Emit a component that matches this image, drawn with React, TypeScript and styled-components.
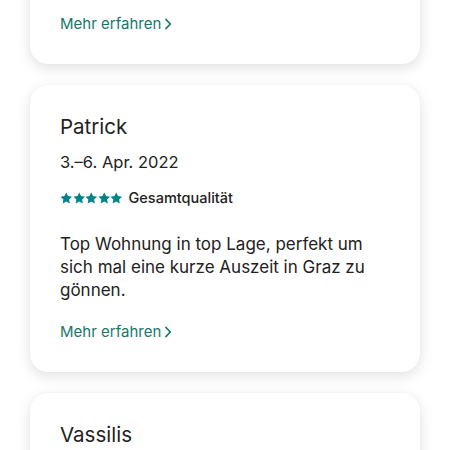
import React from "react";
import styled, { createGlobalStyle } from "styled-components";

const Global = createGlobalStyle`
  html, body { margin: 0; padding: 0; background: #ffffff; }
  body { font-family: Inter, "Noto Sans", Roboto, sans-serif; color: #222222; }
`;

const Page = styled.div`
  width: 450px;
  height: 450px;
  overflow: hidden;
  background: #ffffff;
`;

const List = styled.div`
  display: flex;
  flex-direction: column;
  gap: 21px;
  padding: 0 30px;
  margin-top: -186px;
`;

const Card = styled.div`
  background: #ffffff;
  border-radius: 18px;
  box-shadow: 0 4px 14px rgba(0, 0, 0, 0.12), 0 0 2px rgba(0, 0, 0, 0.04);
  padding: 29px 30px 30px;
  display: flex;
  flex-direction: column;
`;

const FirstCard = styled(Card)`
  padding-top: 200px;
`;

const Name = styled.div`
  font-size: 20.5px;
  line-height: 26px;
  font-weight: 400;
  color: #222222;
`;

const DateText = styled.div`
  margin-top: 11px;
  font-size: 16.5px;
  line-height: 22px;
  color: #222222;
`;

const RatingRow = styled.div`
  margin-top: 15px;
  display: flex;
  align-items: center;
  gap: 6px;
  font-size: 14.5px;
  line-height: 20px;
  font-weight: 500;
  color: #222222;
`;

const Stars = styled.div`
  display: flex;
  gap: 0;
  color: #008489;
`;

const Body = styled.p`
  margin: 25px 0 0;
  font-size: 17px;
  line-height: 23px;
  color: #222222;
`;

const MoreLink = styled.a<{ $first?: boolean }>`
  margin-top: ${(p) => (p.$first ? "0" : "20px")};
  display: inline-flex;
  align-items: center;
  gap: 3px;
  font-size: 15px;
  line-height: 20px;
  color: #17776c;
  text-decoration: none;
  align-self: flex-start;
`;

const Star = () => (
  <svg width="12.5" height="12.5" viewBox="0 0 24 24" fill="currentColor">
    <path d="M12 0.8l3.4 7 7.7 1.1-5.6 5.4 1.3 7.7L12 18.4 5.2 22l1.3-7.7L0.9 8.9l7.7-1.1z" />
  </svg>
);

const Chevron = () => (
  <svg width="8" height="12" viewBox="0 0 8 12" fill="none" stroke="currentColor" strokeWidth="1.8" strokeLinecap="round" strokeLinejoin="round">
    <path d="M2 1.5L6.3 6 2 10.5" />
  </svg>
);

const More = ({ first }: { first?: boolean }) => (
  <MoreLink $first={first}>
    Mehr erfahren
    <Chevron />
  </MoreLink>
);

export default function App() {
  return (
    <Page>
      <Global />
      <List>
        <FirstCard>
          <More first />
        </FirstCard>
        <Card>
          <Name>Patrick</Name>
          <DateText>3.–6. Apr. 2022</DateText>
          <RatingRow>
            <Stars>
              <Star />
              <Star />
              <Star />
              <Star />
              <Star />
            </Stars>
            Gesamtqualität
          </RatingRow>
          <Body>
            Top Wohnung in top Lage, perfekt um sich mal eine kurze Auszeit in Graz zu gönnen.
          </Body>
          <More />
        </Card>
        <Card>
          <Name>Vassilis</Name>
        </Card>
      </List>
    </Page>
  );
}
